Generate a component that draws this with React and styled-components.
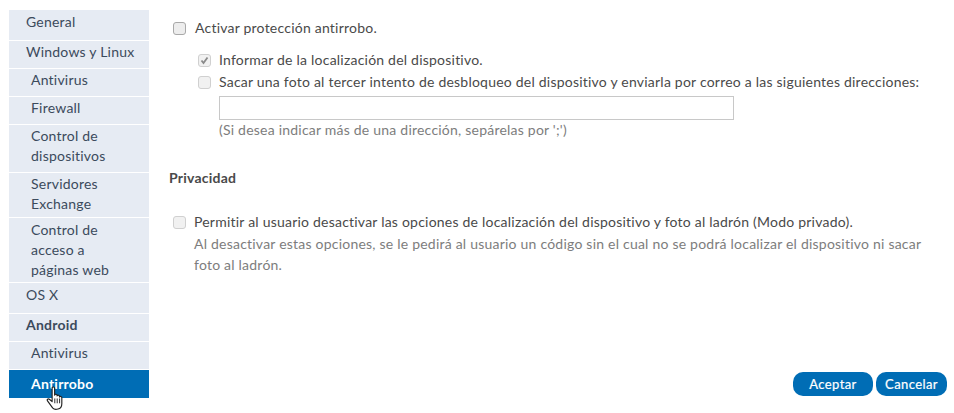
import React from 'react';
import styled, { createGlobalStyle } from 'styled-components';

const Global = createGlobalStyle`
  html, body {
    margin: 0;
    padding: 0;
    background: #fff;
    font-family: "Lato", "Liberation Sans", sans-serif;
    font-size: 14px;
    letter-spacing: 0.22px;
    color: #4a4a4a;
  }
`;

const Page = styled.div`
  width: 954px;
  height: 413px;
  display: flex;
  overflow: hidden;
  padding: 10px 0 0 9px;
  box-sizing: border-box;
`;

const Sidebar = styled.ul`
  list-style: none;
  margin: 0;
  padding: 0;
  width: 140px;
  flex: none;
  display: flex;
  flex-direction: column;
  gap: 1px;
`;

const NavItem = styled.li`
  background: ${p => (p.$active ? '#006db5' : '#e6ebf3')};
  color: ${p => (p.$active ? '#fff' : '#3b4a5c')};
  font-weight: ${p => (p.$active || p.$bold ? 700 : 400)};
  padding: ${p => p.$pt}px 8px ${p => p.$pb}px ${p => (p.$sub ? '22px' : '17px')};
  line-height: 20px;
  position: relative;
`;

const Cursor = styled.svg`
  position: absolute;
  left: 37px;
  top: 16px;
  width: 18px;
  height: 24px;
`;

const Content = styled.div`
  flex: 1;
  position: relative;
  padding: 8px 0 0 20px;
  display: flex;
  flex-direction: column;
`;

const Row = styled.label`
  display: flex;
  align-items: center;
  gap: ${p => p.$gap || 8}px;
  line-height: 20px;
  margin-left: ${p => (p.$indent ? '29px' : '4px')};
  margin-top: ${p => p.$mt || 0}px;
`;

const Check = styled.span`
  width: 13px;
  height: 13px;
  flex: none;
  box-sizing: border-box;
  border: 1px solid ${p => (p.$dim ? '#d0d0d0' : '#a9a9a9')};
  border-radius: 3px;
  background: ${p => (p.$dim ? '#f1f1f1' : '#ededed')};
  display: flex;
  align-items: center;
  justify-content: center;
`;

const Indented = styled.div`
  margin-left: ${p => p.$left}px;
  margin-top: ${p => p.$mt || 0}px;
`;

const Field = styled.input`
  display: block;
  width: 515px;
  height: 24px;
  box-sizing: border-box;
  border: 1px solid #c8c8c8;
  background: #fff;
  outline: none;
  margin-top: 4px;
`;

const Hint = styled.div`
  color: #7d7d7d;
  line-height: ${p => p.$lh || 20}px;
`;

const Heading = styled.h3`
  margin: 28px 0 0;
  font-size: 14px;
  font-weight: 700;
  line-height: 20px;
  color: #4a4a4a;
`;

const Actions = styled.div`
  position: absolute;
  right: 7px;
  bottom: 17px;
  display: flex;
  gap: 3px;
`;

const Button = styled.button`
  height: 24px;
  border: 0;
  border-radius: 10px;
  background: #006db5;
  color: #fff;
  font: 400 13px "Lato", "Liberation Sans", sans-serif;
  letter-spacing: 0.4px;
  -webkit-text-stroke: 0.2px #fff;
  padding: 0;
  width: ${p => p.$w}px;
`;

const items = [
  { label: 'General', pt: 2, pb: 8 },
  { label: 'Windows y Linux', pt: 1, pb: 6 },
  { label: 'Antivirus', sub: true, pt: 1, pb: 6 },
  { label: 'Firewall', sub: true, pt: 1, pb: 6 },
  { label: <>Control de<br />dispositivos</>, sub: true, pt: 1, pb: 6 },
  { label: <>Servidores<br />Exchange</>, sub: true, pt: 1, pb: 3 },
  { label: <>Control de<br />acceso a<br />páginas web</>, sub: true, pt: 2, pb: 2 },
  { label: 'OS X', pt: 2, pb: 8 },
  { label: 'Android', bold: true, pt: 1, pb: 6 },
  { label: 'Antivirus', sub: true, pt: 1, pb: 6 },
];

export default function App() {
  return (
    <>
      <Global />
      <Page>
        <Sidebar>
          {items.map((it, i) => (
            <NavItem key={i} $pt={it.pt} $pb={it.pb} $sub={it.sub} $bold={it.bold}>{it.label}</NavItem>
          ))}
          <NavItem $sub $active $pt={4} $pb={4}>
            Antirrobo
            <Cursor viewBox="0 0 18 25">
              <path d="M6 2.2c0-1.5 2.6-1.5 2.6 0v7.4c.3-1.4 2.6-1.3 2.6.2v.6c.3-1.2 2.5-1.1 2.5.4v.7c.4-1 2.4-.8 2.4.7v6.2c0 2.6-1.4 5-4 5.6-2 .5-4.4.2-5.6-1.2L1.2 15.5c-.9-1.2.6-2.7 1.900-1.700L6 16.2Z" fill="#fff" stroke="#222" strokeWidth="1.2" strokeLinejoin="round" />
              <path d="M8.800 13v5M11.300 13v5M13.800 13v5" stroke="#222" strokeWidth="1" fill="none" />
            </Cursor>
          </NavItem>
        </Sidebar>
        <Content>
          <Row $gap={9}>
            <Check />
            <span>Activar protección antirrobo.</span>
          </Row>
          <Row $indent $mt={12}>
            <Check $dim>
              <svg width="9" height="9" viewBox="0 0 9 9"><path d="M1.500 4.500 3.500 7 7.500 1.500" fill="none" stroke="#8a8a8a" strokeWidth="1.800" /></svg>
            </Check>
            <span>Informar de la localización del dispositivo.</span>
          </Row>
          <Row $indent $mt={2}>
            <Check $dim />
            <span>Sacar una foto al tercer intento de desbloqueo del dispositivo y enviarla por correo a las siguientes direcciones:</span>
          </Row>
          <Indented $left={50}>
            <Field />
            <Hint>(Si desea indicar más de una dirección, sepárelas por ';')</Hint>
          </Indented>
          <Heading>Privacidad</Heading>
          <Row $mt={24}>
            <Check $dim />
            <span>Permitir al usuario desactivar las opciones de localización del dispositivo y foto al ladrón (Modo privado).</span>
          </Row>
          <Indented $left={25} $mt={1}>
            <Hint $lh={21}>Al desactivar estas opciones, se le pedirá al usuario un código sin el cual no se podrá localizar el dispositivo ni sacar<br />foto al ladrón.</Hint>
          </Indented>
          <Actions>
            <Button $w={80}>Aceptar</Button>
            <Button $w={71}>Cancelar</Button>
          </Actions>
        </Content>
      </Page>
    </>
  );
}
